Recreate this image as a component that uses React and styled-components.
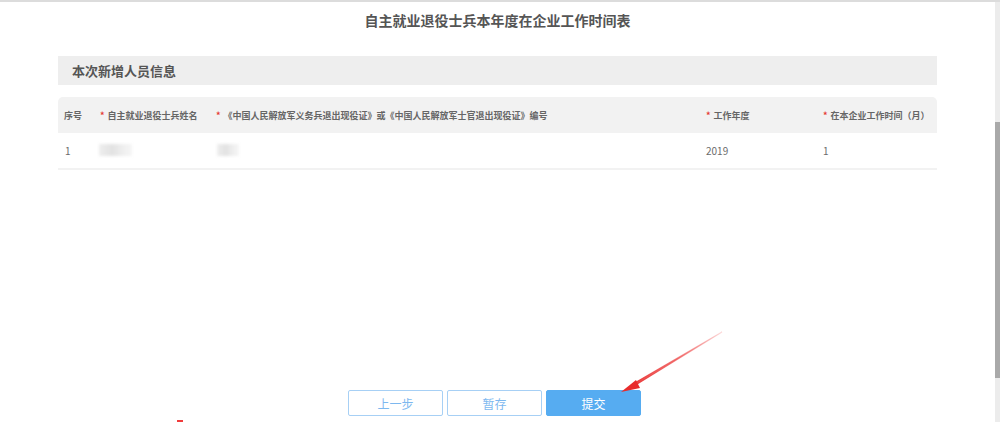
import styled, { createGlobalStyle } from "styled-components";

const GlobalStyle = createGlobalStyle`
  html, body {
    margin: 0;
    padding: 0;
    width: 1000px;
    height: 422px;
    overflow: hidden;
    background: #fff;
    font-family: "Noto Sans CJK SC", "Noto Sans", sans-serif;
  }
`;

const Screen = styled.div`
  position: relative;
  display: flex;
  width: 1000px;
  height: 422px;
  border-top: 2px solid #dcdcdc;
  box-sizing: border-box;
`;

const Page = styled.div`
  flex: 1;
  display: flex;
  flex-direction: column;
  padding: 0 58px 0 58px;
`;

const Scrollbar = styled.div`
  width: 5px;
  background: #ececec;
  padding-top: 120px;
  box-sizing: border-box;
`;

const Thumb = styled.div`
  height: 256px;
  background: #a9a9a9;
`;

const Title = styled.h1`
  margin: 0;
  height: 38px;
  line-height: 36px;
  text-align: center;
  font-size: 14px;
  font-weight: bold;
  color: #555;
`;

const SectionBar = styled.div`
  margin-top: 16px;
  height: 29px;
  background: #eeeeee;
  padding-left: 14px;
  display: flex;
  align-items: center;
  font-size: 13px;
  font-weight: bold;
  color: #555;
`;

const Table = styled.div`
  margin-top: 12px;
  display: flex;
  flex-direction: column;
`;

const Row = styled.div`
  display: grid;
  grid-template-columns: 40px 116px 491px 117px 1fr;
  height: ${(p) => (p.$head ? "36px" : "37px")};
  align-items: center;
  background: ${(p) => (p.$head ? "#f2f2f2" : "#fff")};
  border-radius: ${(p) => (p.$head ? "5px 5px 0 0" : "0")};
  border-bottom: ${(p) => (p.$head ? "none" : "2px solid #f2f2f2")};
  box-sizing: border-box;
`;

const HeadCell = styled.div`
  padding-left: ${(p) => p.$pad || "6px"};
  font-size: 9px;
  font-weight: bold;
  color: #666;
  white-space: nowrap;
`;

const Star = styled.span`
  color: #e53935;
  margin-right: 3px;
`;

const Cell = styled.div`
  padding-left: ${(p) => p.$pad || "7px"};
  padding-bottom: 1px;
  font-size: 10px;
  color: #6b6b6b;
`;

const Blur = styled.div`
  width: ${(p) => p.$w}px;
  height: 12px;
  background: linear-gradient(90deg, #eee, #e2e2e2 40%, #eee 70%, #f6f6f6);
  filter: blur(1.5px);
`;

const Footer = styled.div`
  margin-top: auto;
  margin-bottom: 6px;
  display: flex;
  justify-content: center;
  gap: 4px;
  padding-right: 6px;
`;

const Button = styled.button`
  width: 95px;
  height: 26px;
  border-radius: 2px;
  font-family: inherit;
  font-size: 12px;
  border: 1px solid ${(p) => (p.$primary ? "#56acf1" : "#a7d0f5")};
  background: ${(p) => (p.$primary ? "#56acf1" : "#fff")};
  color: ${(p) => (p.$primary ? "#fff" : "#7db8ef")};
  padding: 0;
`;

const Arrow = styled.svg`
  position: absolute;
  left: 0;
  top: 0;
  pointer-events: none;
`;

export default function App() {
  return (
    <>
      <GlobalStyle />
      <Screen>
        <Page>
          <Title>自主就业退役士兵本年度在企业工作时间表</Title>
          <SectionBar>本次新增人员信息</SectionBar>
          <Table>
            <Row $head>
              <HeadCell>序号</HeadCell>
              <HeadCell $pad="2px">
                <Star>*</Star>自主就业退役士兵姓名
              </HeadCell>
              <HeadCell $pad="2px">
                <Star>*</Star>《中国人民解放军义务兵退出现役证》或《中国人民解放军士官退出现役证》编号
              </HeadCell>
              <HeadCell $pad="1px">
                <Star>*</Star>工作年度
              </HeadCell>
              <HeadCell $pad="1px">
                <Star>*</Star>在本企业工作时间（月）
              </HeadCell>
            </Row>
            <Row>
              <Cell>1</Cell>
              <Cell $pad="1px">
                <Blur $w={33} />
              </Cell>
              <Cell $pad="3px">
                <Blur $w={22} />
              </Cell>
              <Cell $pad="1px">2019</Cell>
              <Cell $pad="1px">1</Cell>
            </Row>
          </Table>
          <Footer>
            <Button>上一步</Button>
            <Button>暂存</Button>
            <Button $primary>提交</Button>
          </Footer>
        </Page>
        <Scrollbar>
          <Thumb />
        </Scrollbar>
        <Arrow width="1000" height="422" viewBox="0 0 1000 422">
          <defs>
            <linearGradient id="fade" x1="722" y1="330" x2="622" y2="390" gradientUnits="userSpaceOnUse">
              <stop offset="0" stopColor="#f04848" stopOpacity="0.2" />
              <stop offset="1" stopColor="#e82c2c" />
            </linearGradient>
          </defs>
          <path d="M722 330 L634 384 L633 382 Z" fill="url(#fade)" stroke="url(#fade)" strokeWidth="1.2" />
          <path d="M621 390 L636 378 L640 386 Z" fill="#e82c2c" />
          <rect x="177" y="418" width="6" height="4" fill="#f03c3c" />
        </Arrow>
      </Screen>
    </>
  );
}
